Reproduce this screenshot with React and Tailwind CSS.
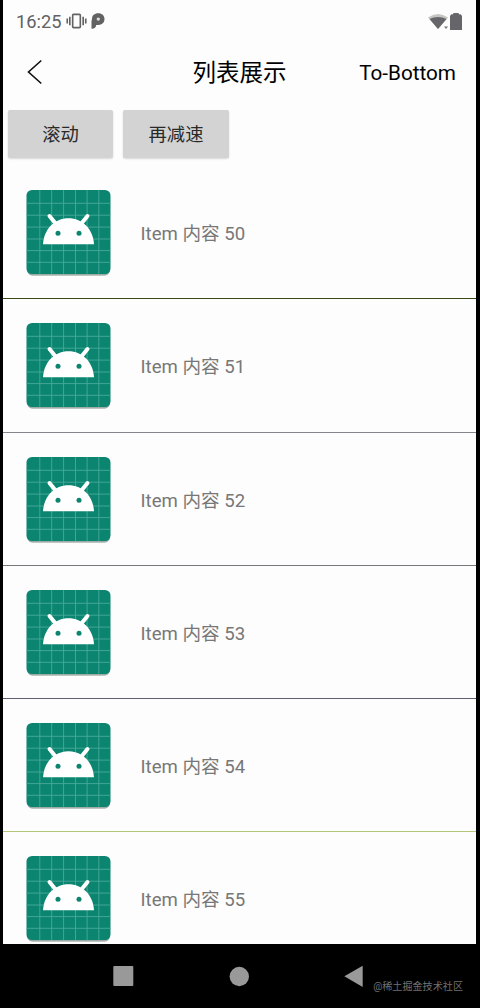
const ROWS = [
  { n: 50, height: 'h-[134px]', pad: 'pt-[25px]', line: 'border-[#3a4a16]' },
  { n: 51, height: 'h-[134px]', pad: 'pt-[24px]', line: 'border-[#85858b]' },
  { n: 52, height: 'h-[133px]', pad: 'pt-[24px]', line: 'border-[#77777d]' },
  { n: 53, height: 'h-[133px]', pad: 'pt-[24px]', line: 'border-[#626070]' },
  { n: 54, height: 'h-[133px]', pad: 'pt-[24px]', line: 'border-[#b3c678]' },
  { n: 55, height: 'h-[134px]', pad: 'pt-[24px]', line: 'border-[#85858b]' },
];

const GRID = [13.3, 25.2, 37.1, 49, 60.6, 72.3];

function AndroidIcon() {
  return (
    <svg className="h-[88px] w-[85px] shrink-0" viewBox="-0.5 0 85 88">
      <rect x="1" y="4" width="82" height="82" rx="5" fill="#000" opacity=".12" />
      <rect x="0.7" y="3" width="82.6" height="82.4" rx="5" fill="#4f6f68" opacity=".45" />
      <rect width="84" height="84" rx="5.5" fill="#0b8470" />
      <g stroke="#48aa9a" strokeWidth="0.9">
        {GRID.map((p) => (
          <path key={p} d={`M${p} 0V84M0 ${p}H84`} />
        ))}
      </g>
      <path d="M16.5 54.2C17.5 39 28 28.3 42 28.3S66.500 39 67.500 54.200Z" fill="#fff" />
      <path d="M23 26L29.500 34M61 26L54.500 34" stroke="#fff" strokeWidth="4" strokeLinecap="round" />
      <circle cx="31.5" cy="43.300" r="2.500" fill="#0b8470" />
      <circle cx="52.500" cy="43.300" r="2.500" fill="#0b8470" />
    </svg>
  );
}

function StatusBar() {
  return (
    <div className="flex h-[42px] shrink-0 items-center pl-[13px] pr-[14px] text-[#626262]">
      <span className="w-[47px] whitespace-nowrap pt-[2px] text-[18.3px] leading-none">16:25</span>
      <svg className="ml-[3px] h-[16px] w-[21px]" viewBox="0 0 22 16" fill="none" stroke="currentColor">
        <rect x="7" y="1" width="8" height="14" rx="1" strokeWidth="1.700" />
        <path d="M4 3.500V12.500M18 3.500V12.500M1.300 5.500V10.500M20.700 5.500V10.500" strokeWidth="1.700" />
      </svg>
      <svg className="ml-[4px] h-[16px] w-[14px]" viewBox="0 0 14 16">
        <path fill="currentColor" d="M1 6C1 2.500 3.500 0.300 7.300 0.300C11 0.300 13.500 2.700 13.500 6C13.500 9.500 11 11.900 7.300 11.900H5.200C5.100 14.200 3.500 15.800 0.500 15.700V8Z" />
        <circle cx="7.300" cy="6.100" r="1.700" fill="#dcdcdc" />
      </svg>
      <svg className="ml-auto h-[17px] w-[21px]" viewBox="0 0 21 17">
        <path d="M0 4.500Q10 -2.500 20 4.500L10 16Z" fill="#c5c5c1" />
        <path d="M1.500 6Q10 2 18.500 6L10 16Z" fill="#66666a" />
        <path d="M14.500 12H21V17H14.500Z" fill="#fdfdfd" />
        <path d="M16 13.500H20L18 16Z" fill="#777" />
      </svg>
      <svg className="ml-[1px] h-[17px] w-[12px]" viewBox="0 0 12 17" fill="#66666a">
        <path d="M3.300 0H8.700V1.300H10.500Q12 2 12 3.500V17H0V3.500Q0 2 1.500 1.300H3.300Z" />
      </svg>
    </div>
  );
}

export default function App() {
  return (
    <div className="flex h-[1008px] w-[480px] flex-col overflow-hidden bg-black font-[Roboto,'Noto_Sans_CJK_SC',sans-serif]">
      <div className="ml-[3px] mr-[4px] flex h-[944px] shrink-0 flex-col overflow-hidden bg-[#fdfdfd]">
        <StatusBar />
        <header className="grid h-[60px] shrink-0 grid-cols-[1fr_auto_1fr] items-center pl-[24px] pr-[20px] text-black">
          <svg className="h-[26px] w-[16px]" viewBox="0 0 16 26" fill="none" stroke="#111" strokeWidth="1.600">
            <path d="M14.300 1.500L1.500 13L14.300 24.500" />
          </svg>
          <h1 className="-ml-[4px] pt-[4px] text-[23.500px] leading-none">列表展示</h1>
          <span className="justify-self-end pt-[2px] text-[20.700px] leading-none">To-Bottom</span>
        </header>
        <div className="flex h-[63px] shrink-0 gap-[10px] pl-[5px] pt-[8px] text-[18.300px] text-[#292929]">
          <button className="h-[48px] w-[105px] rounded-[2px] bg-[#d3d3d3] pt-[2px] shadow-[0_1px_2px_#00000026]">滚动</button>
          <button className="h-[48px] w-[106px] rounded-[2px] bg-[#d3d3d3] pt-[2px] shadow-[0_1px_2px_#00000026]">再减速</button>
        </div>
        <main className="shrink-0">
          {ROWS.map(({ n, height, pad, line }) => (
            <div key={n} className={`flex ${height} ${pad} items-start border-b ${line} pl-[23px]`}>
              <AndroidIcon />
              <span className="ml-[29.500px] flex h-[86px] items-center whitespace-nowrap pt-[3px] text-[18.600px] text-[#777]">Item 内容 {n}</span>
            </div>
          ))}
        </main>
      </div>
      <nav className="relative h-[64px] shrink-0 bg-black">
        <svg className="h-full w-full" viewBox="0 0 480 64" fill="#999">
          <rect x="113.300" y="22" width="20" height="20" rx="1" />
          <circle cx="239.300" cy="32.500" r="9.700" />
          <path d="M344.300 32.300L362.700 21.700V43Z" />
        </svg>
        <span className="absolute right-[17px] top-[36px] whitespace-nowrap text-[10.100px] leading-[14px] text-[#707070]">@稀土掘金技术社区</span>
      </nav>
    </div>
  );
}
